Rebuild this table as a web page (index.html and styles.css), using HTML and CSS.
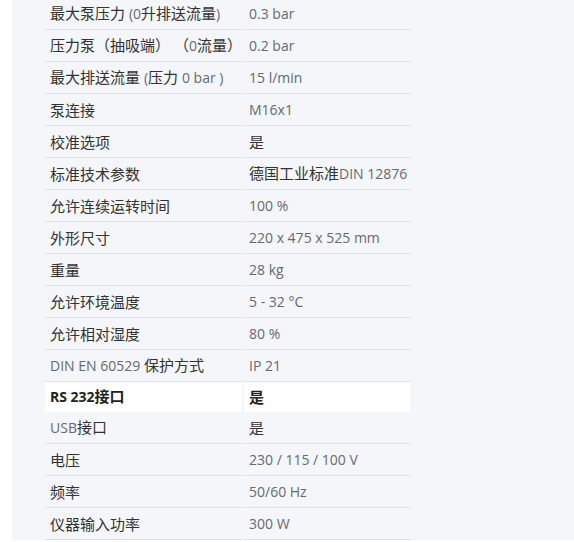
FILE: index.html
```html
<!DOCTYPE html>
<html lang="zh">
<head>
<meta charset="utf-8">
<title>技术参数</title>
<link rel="stylesheet" href="styles.css">
</head>
<body>
<div class="page">
  <table class="specs">
    <tbody>
      <tr><td class="k">最大泵压力 <span class="en">(0</span>升排送流量<span class="en">)</span></td><td class="v"><span class="en">0.3 bar</span></td></tr>
      <tr><td class="k">压力泵（抽吸端） （<span class="en">0</span>流量）</td><td class="v"><span class="en">0.2 bar</span></td></tr>
      <tr><td class="k">最大排送流量 <span class="en">(</span>压力 <span class="en">0 bar )</span></td><td class="v"><span class="en">15 l/min</span></td></tr>
      <tr><td class="k">泵连接</td><td class="v"><span class="en">M16x1</span></td></tr>
      <tr><td class="k">校准选项</td><td class="v">是</td></tr>
      <tr><td class="k">标准技术参数</td><td class="v">德国工业标准<span class="en">DIN 12876</span></td></tr>
      <tr><td class="k">允许连续运转时间</td><td class="v"><span class="en">100 %</span></td></tr>
      <tr><td class="k">外形尺寸</td><td class="v"><span class="en">220 x 475 x 525 mm</span></td></tr>
      <tr><td class="k">重量</td><td class="v"><span class="en">28 kg</span></td></tr>
      <tr><td class="k">允许环境温度</td><td class="v"><span class="en">5 - 32 °C</span></td></tr>
      <tr><td class="k">允许相对湿度</td><td class="v"><span class="en">80 %</span></td></tr>
      <tr><td class="k"><span class="en">DIN EN 60529 </span>保护方式</td><td class="v"><span class="en">IP 21</span></td></tr>
      <tr class="hl"><td class="k"><span class="en">RS 232</span>接口</td><td class="v">是</td></tr>
      <tr><td class="k"><span class="en">USB</span>接口</td><td class="v">是</td></tr>
      <tr><td class="k">电压</td><td class="v"><span class="en">230 / 115 / 100 V</span></td></tr>
      <tr><td class="k">频率</td><td class="v"><span class="en">50/60 Hz</span></td></tr>
      <tr><td class="k">仪器输入功率</td><td class="v"><span class="en">300 W</span></td></tr>
    </tbody>
  </table>
</div>
</body>
</html>
```
FILE: styles.css
```css
html, body {
  margin: 0;
  padding: 0;
  background: #ffffff;
  height: 100%;
  overflow: hidden;
}

.page {
  margin-left: 12px;
  min-height: 100%;
  background: #f4f6f9;
  padding-left: 31px;
  box-sizing: border-box;
}

.specs {
  border-collapse: separate;
  border-spacing: 2px 0;
  table-layout: fixed;
  width: 369px;
  margin-top: -2px;
  font-family: "Open Sans", "Noto Sans CJK SC", sans-serif;
  font-size: 15px;
  color: #333333;
}

.specs td {
  height: 32px;
  padding: 0 5px;
  border-bottom: 1px solid #dde0e6;
  vertical-align: middle;
  white-space: nowrap;
  line-height: 20px;
}

.specs td.k {
  width: 197px;
  box-sizing: border-box;
}

.specs td.v {
  width: 166px;
  box-sizing: border-box;
}

.en {
  font-size: 14px;
  color: #666a70;
}

.specs tr.hl td {
  height: 30px;
  background: #ffffff;
  font-weight: bold;
  color: #222222;
  border-bottom-color: #ffffff;
}

.specs tr.hl .en {
  color: #222222;
}
```
